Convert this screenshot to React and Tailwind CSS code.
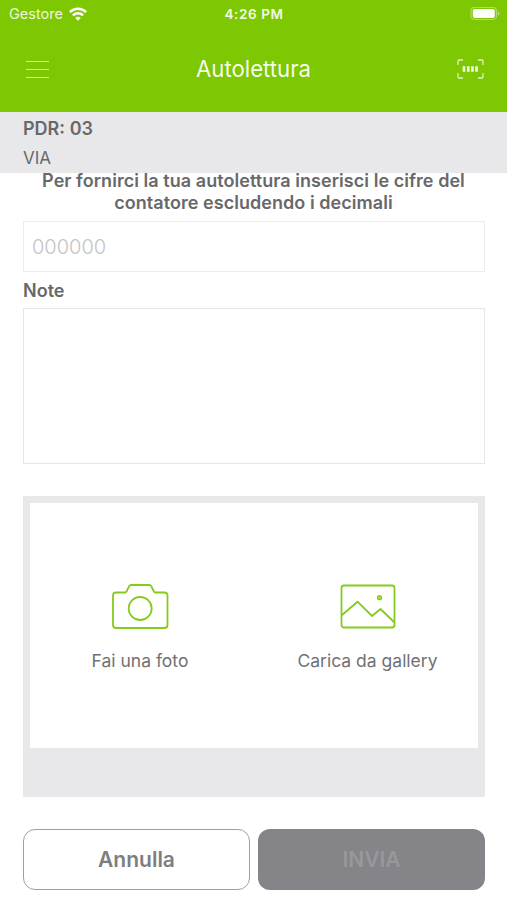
function WifiIcon() {
  return (
    <svg className="ml-[6px] h-[14px] w-[18px]" viewBox="0 0 18 14" fill="none" stroke="white" strokeWidth="2.5">
      <path d="M0.9 5.1a11.6 11.6 0 0 1 16.2 0" />
      <path d="M3.9 8.3a7.3 7.3 0 0 1 10.2 0" />
      <path d="M9 13.8 6.2 11a4 4 0 0 1 5.6 0z" fill="white" stroke="none" />
    </svg>
  );
}

function BatteryIcon() {
  return (
    <svg className="h-[14px] w-[31px]" viewBox="0 0 31 14" fill="none">
      <rect x="2" y="0.3" width="25.5" height="12.2" rx="3.6" stroke="white" strokeOpacity="0.4" strokeWidth="1.2" />
      <rect x="3.800" y="2" width="22" height="8.9" rx="1.8" fill="white" />
      <path d="M29 4.4c2 .8 2 3.4 0 4.2z" fill="white" fillOpacity="0.5" />
    </svg>
  );
}

function ScanIcon() {
  return (
    <svg className="h-[20px] w-[27px]" viewBox="0 0 27 20" fill="none" stroke="white">
      <path
        d="M1 6V2q0-1 1-1H6M21 1h4q1 0 1 1v4M26 14V18q0 1-1 1h-4M6 19H2q-1 0-1-1v-4"
        strokeOpacity="0.75"
        strokeWidth="1.3"
      />
      <path d="M7 7.3v5.4M11.3 7.3v5.4M15.4 7.3v5.4M19.5 7.3v5.4" strokeOpacity="0.9" strokeWidth="2.6" />
    </svg>
  );
}

function CameraIcon() {
  return (
    <svg className="h-[46px] w-[58px]" viewBox="0 0.5 58 46" fill="none" stroke="#84cb1c" strokeWidth="1.8" strokeLinejoin="round">
      <path d="M5 9H14Q15 9 15.500 8L18.200 2.700Q18.800 1.500 20.200 1.500H38.200Q39.600 1.500 40.200 2.700L42.900 8Q43.400 9 44.400 9H53.500Q56.500 9 56.500 12V41.500Q56.500 44.500 53.500 44.500H5Q2 44.500 2 41.500V12Q2 9 5 9Z" />
      <circle cx="29.200" cy="25" r="11.500" />
    </svg>
  );
}

function GalleryIcon() {
  return (
    <svg className="h-[46px] w-[56px]" viewBox="0 0.5 56 46" fill="none" stroke="#84cb1c" strokeWidth="1.8" strokeLinejoin="round">
      <rect x="1.500" y="2" width="53" height="42" rx="2.500" />
      <path d="M1.500 32 17.500 18.200 32 32.500 40.500 25.500 54.500 39" />
      <circle cx="39.500" cy="14.200" r="1.900" fill="#b7df7b" strokeWidth="1.500" />
    </svg>
  );
}

export default function App() {
  return (
    <div className="flex h-[900px] w-[507px] flex-col overflow-hidden bg-white font-['Inter','Liberation_Sans',sans-serif] text-[#68686b]">
      <header className="h-[112px] shrink-0 bg-[#7dc703] text-white">
        <div className="grid h-[28px] grid-cols-3 items-center pl-[8px] pr-[7px]">
          <div className="flex items-center">
            <span className="ml-px text-[14.5px] leading-[18px] text-white/85">Gestore</span>
            <WifiIcon />
          </div>
          <span className="text-center text-[13.5px] font-semibold leading-[18px] tracking-[0.6px] text-white/90">4:26 PM</span>
          <div className="flex justify-end">
            <BatteryIcon />
          </div>
        </div>
        <div className="grid h-[82px] grid-cols-[60px_1fr_60px] items-center">
          <button aria-label="Menu" className="ml-[26px] flex w-[23px] flex-col gap-[7px]">
            <span className="h-px w-full bg-white/65" />
            <span className="h-px w-full bg-white/65" />
            <span className="h-px w-full bg-white/65" />
          </button>
          <h1 className="text-center text-[22.200px] leading-7 text-white/95">Autolettura</h1>
          <button aria-label="Scan" className="ml-[10px]">
            <ScanIcon />
          </button>
        </div>
      </header>

      <section className="h-[61px] shrink-0 bg-[#e8e8ea] px-[23px] pt-[6px]">
        <p className="text-[18px] font-semibold leading-[22px]">PDR: 03</p>
        <p className="mt-[7px] text-[17px] leading-[22px]">VIA</p>
      </section>

      <main className="flex flex-col px-[23px]">
        <p className="-mt-[3px] text-center text-[18px] font-semibold leading-[22px] tracking-[0.05px]">
          Per fornirci la tua autolettura inserisci le cifre del
          <br />
          contatore escludendo i decimali
        </p>
        <input
          placeholder="000000"
          className="mt-[7px] h-[51px] w-[462px] border border-[#ececee] bg-white px-2 text-[20px] font-light placeholder:text-[#c4c4c6]"
        />
        <label className="mt-[8px] text-[18px] font-semibold leading-[22px]">Note</label>
        <textarea className="mt-[6px] h-[156px] w-[462px] resize-none border border-[#e6e6e8]" />

        <section className="mt-[32px] h-[301px] w-[462px] bg-[#e8e8ea] px-[7px] pt-[7px]">
          <div className="grid h-[245px] grid-cols-2 bg-white pt-[80.5px]">
            <button className="flex flex-col items-center pr-[4px]">
              <CameraIcon />
              <span className="mt-[20.5px] text-[17.500px] leading-[22px] text-[#717174]">Fai una foto</span>
            </button>
            <button className="flex flex-col items-center pl-[3px]">
              <GalleryIcon />
              <span className="mt-[20.5px] text-[17.500px] leading-[22px] text-[#717174]">Carica da gallery</span>
            </button>
          </div>
        </section>

        <div className="mt-[31.5px] grid h-[61px] w-[462px] grid-cols-2 gap-[8px]">
          <button className="rounded-[12px] border-[1.5px] border-[#a0a0a2] pt-[2px] text-[21px] font-semibold text-[#7e7e81]">Annulla</button>
          <button className="rounded-[12px] bg-[#858489] pt-[2px] text-[21px] font-semibold text-[#98979b]">INVIA</button>
        </div>
      </main>
    </div>
  );
}
